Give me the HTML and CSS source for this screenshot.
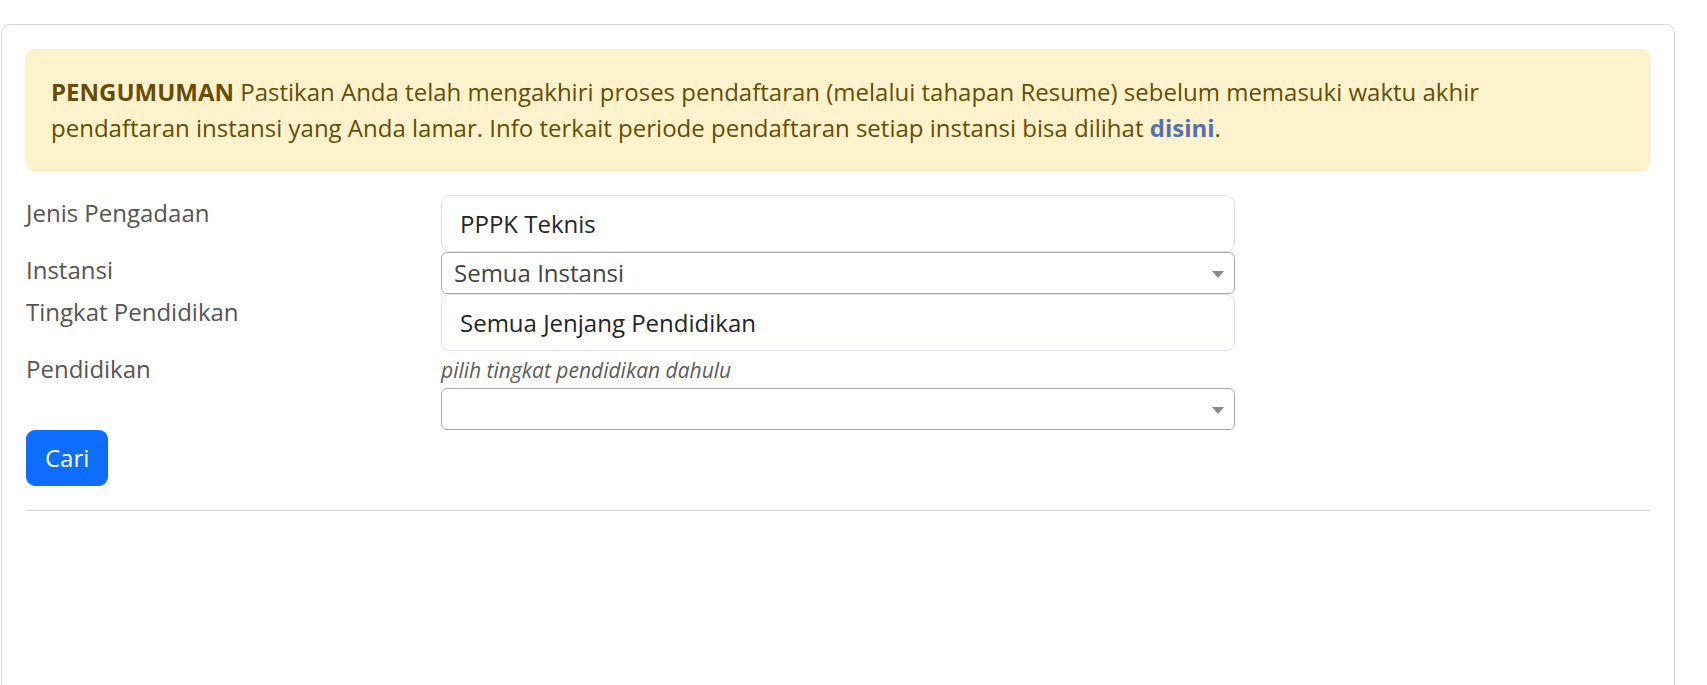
FILE: index.html
```html
<!doctype html>
<html>
    <head>
        <meta charset="utf-8"/>
        <title>Pencarian Formasi</title>
        <link rel="stylesheet" href="styles.css">
    </head>
    <body>
        <div class="card">
            <div class="card-body">
                <div class="alert">
                    <strong>PENGUMUMAN</strong> Pastikan Anda telah mengakhiri proses pendaftaran (melalui tahapan Resume) sebelum memasuki waktu akhir<br>
                    pendaftaran instansi yang Anda lamar. Info terkait periode pendaftaran setiap instansi bisa dilihat <a href="#" class="alert-link">disini</a>.
                </div>
                <form class="filter">
                    <div class="form-row">
                        <label>Jenis Pengadaan</label>
                        <div class="field">
                            <input class="form-control" type="text" value="PPPK Teknis" readonly>
                        </div>
                    </div>
                    <div class="form-row">
                        <label>Instansi</label>
                        <div class="field">
                            <span class="select2">
                                <span class="select2-rendered">Semua Instansi</span>
                                <span class="select2-arrow"><b></b></span>
                            </span>
                        </div>
                    </div>
                    <div class="form-row">
                        <label>Tingkat Pendidikan</label>
                        <div class="field">
                            <input class="form-control" type="text" value="Semua Jenjang Pendidikan" readonly>
                        </div>
                    </div>
                    <div class="form-row">
                        <label>Pendidikan</label>
                        <div class="field">
                            <div class="hint"><small><i>pilih tingkat pendidikan dahulu</i></small></div>
                            <span class="select2">
                                <span class="select2-rendered"></span>
                                <span class="select2-arrow"><b></b></span>
                            </span>
                        </div>
                    </div>
                    <button type="button" class="btn">Cari</button>
                </form>
                <hr>
            </div>
        </div>
    </body>
</html>
```

FILE: styles.css
```css
* {
    box-sizing: border-box;
}
body {
    margin: 0;
    font-family: "Open Sans", "Noto Sans", sans-serif;
    font-size: 24px;
    line-height: 1.5;
    color: #212529;
    background-color: #fff;
}
.card {
    margin: 24px 32px 0 1px;
    min-height: 700px;
    border: 1px solid #d6d6d6;
    border-radius: 9px;
}
.card-body {
    padding: 24px;
}
.alert {
    padding: 24px;
    margin-bottom: 24px;
    color: #664d03;
    background-color: #fff3cd;
    border: 1px solid #ffecb5;
    border-radius: 9px;
}
.alert strong {
    font-weight: 700;
}
.alert-link {
    font-weight: 700;
    color: #5470b3;
    text-decoration: none;
}
.form-row {
    display: grid;
    grid-template-columns: calc(25% + 9px) calc(50% - 18px);
}
.form-row label {
    color: #555;
}
.form-control {
    display: block;
    width: 100%;
    height: 57px;
    padding: 9px 18px;
    font-family: inherit;
    font-size: 24px;
    line-height: 36px;
    color: #212529;
    background-color: #fff;
    border: 1px solid #dee2e6;
    border-radius: 9px;
    outline: none;
}
.select2 {
    position: relative;
    display: block;
    height: 42px;
    border: 1px solid #aaa;
    border-radius: 6px;
    background-color: #fff;
}
.select2-rendered {
    display: block;
    padding-left: 12px;
    padding-right: 30px;
    line-height: 40px;
    color: #444;
    white-space: nowrap;
    overflow: hidden;
}
.select2-arrow {
    position: absolute;
    top: 1px;
    right: 1px;
    width: 30px;
    height: 39px;
}
.select2-arrow b {
    position: absolute;
    left: 50%;
    top: 50%;
    margin-left: -6px;
    margin-top: -3px;
    width: 0;
    height: 0;
    border-style: solid;
    border-width: 7px 6px 0 6px;
    border-color: #888 transparent transparent transparent;
}
.hint {
    line-height: 36px;
}
.hint small {
    font-size: 21px;
    color: #5c5c5c;
}
.btn {
    display: inline-block;
    padding: 9px 18px;
    font-family: inherit;
    font-size: 24px;
    line-height: 36px;
    color: #fff;
    background-color: #0d6efd;
    border: 1px solid #0d6efd;
    border-radius: 9px;
    cursor: pointer;
}
hr {
    margin: 24px 0;
    border: 0;
    border-top: 1px solid #d4d4d4;
}
```
